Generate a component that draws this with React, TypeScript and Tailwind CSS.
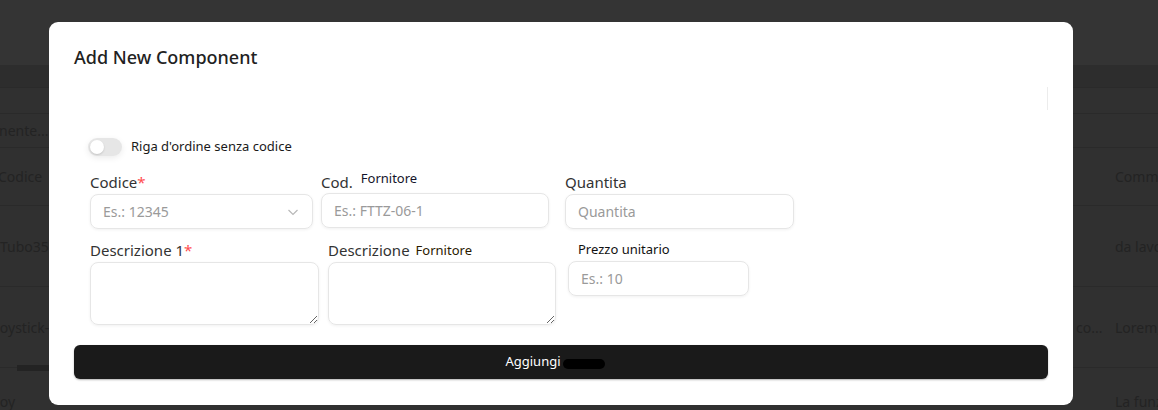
import React from "react";

const font = { fontFamily: '"Noto Sans", "Open Sans", sans-serif' } as React.CSSProperties;

function BgRow({ h, left, off, mid, right, border = true }: { h: number; left: string; off: string; mid?: string; right: string; border?: boolean }) {
  return (
    <div
      className={`flex items-center text-[14px] text-[#232323] ${border ? "border-b border-[#2a2a2a]" : ""}`}
      style={{ height: h }}
    >
      <div className={`w-[120px] ${off} whitespace-nowrap overflow-hidden`}>{left}</div>
      <div className="flex-1" />
      <div className="w-[39px] whitespace-nowrap">{mid ?? ""}</div>
      <div className="w-[43px] whitespace-nowrap overflow-hidden">{right}</div>
    </div>
  );
}

export default function App() {
  return (
    <div className="relative w-[1158px] h-[410px] overflow-hidden bg-[#303030]" style={font}>
      {/* background page under overlay */}
      <div className="h-[65px] bg-[#343434]" />
      <div className="h-[23px] bg-[#2d2d2d] border-b border-[#2a2a2a]" />
      <div className="h-[26px] bg-[#303030] border-b border-[#2a2a2a]" />
      <BgRow h={34} left="nente..." off="-ml-[1px]" right="" />
      <BgRow h={58} left="Codice" off="-ml-[2px]" right="Comme" />
      <BgRow h={81} left="Tubo35" off="ml-0" right="da lavo" />
      <BgRow h={81} left="Joystick-" off="-ml-[4px]" mid="co..." right="Lorem," />
      <div className="flex">
        <div className="ml-[17px] w-[32px] h-[6px] -mt-[3px] bg-[#232323]" />
      </div>
      <div className="flex items-center text-[14px] text-[#232323] h-[40px] pt-[20px]">
        <div className="w-[120px] -ml-[4px]">Joy</div>
        <div className="flex-1" />
        <div className="w-[43px] whitespace-nowrap overflow-hidden">La funz</div>
      </div>

      {/* modal */}
      <div className="absolute left-[49px] top-[22px] w-[1024px] h-[383px] bg-white rounded-[9px] px-[25px] pt-[23px]">
        <h2 className="text-[18px] leading-[24px] font-medium text-[#222]">Add New Component</h2>
        <div className="mt-[18px] h-[23px] flex justify-end">
          <div className="w-px h-full bg-[#ececec]" />
        </div>

        <div className="mt-[28px] pl-[14px] flex items-center h-[18px]">
          <div className="relative w-[34px] h-[18px] rounded-full bg-[#e6e6e6] shadow-[0_2px_6px_rgba(0,0,0,0.08)]">
            <div className="absolute left-[2px] top-[2px] w-[14px] h-[14px] rounded-full bg-white shadow-[0_1px_2px_rgba(0,0,0,0.15)]" />
          </div>
          <span className="ml-[9px] text-[13px] text-[#1a1a1a]">Riga d'ordine senza codice</span>
        </div>

        {/* row 1 */}
        <div className="mt-[16px] pl-[16px] flex">
          <div className="w-[223px]">
            <div className="h-[20px] leading-[20px] text-[15px] text-[#333]">
              Codice<span className="text-[#ff4d4f]">*</span>
            </div>
            <div className="mt-[2px] h-[35px] rounded-[8px] border border-[#e6e6e6] shadow-[0_1px_3px_rgba(0,0,0,0.06)] flex items-center justify-between pl-[12px] pr-[13px]">
              <span className="text-[14px] text-[#9a9a9a]">Es.: 12345</span>
              <svg width="12" height="12" viewBox="0 0 12 12" fill="none" stroke="#b8b8b8" strokeWidth="1.2">
                <path d="M1.5 4 L6 8.5 L10.5 4" />
              </svg>
            </div>
          </div>
          <div className="ml-[8px] w-[228px]">
            <div className="h-[20px] leading-[20px] text-[15px] text-[#333] flex">
              <span>Cod.</span>
              <span className="ml-[8px] text-[13px] text-[#14142a] -mt-[4px]">Fornitore</span>
            </div>
            <div className="mt-[1px] h-[35px] rounded-[8px] border border-[#e6e6e6] shadow-[0_1px_3px_rgba(0,0,0,0.06)] flex items-center pl-[12px]">
              <span className="text-[14px] text-[#9a9a9a]">Es.: FTTZ-06-1</span>
            </div>
          </div>
          <div className="ml-[16px] w-[229px]">
            <div className="h-[20px] leading-[20px] text-[15px] text-[#333]">Quantita</div>
            <div className="mt-[2px] h-[35px] rounded-[8px] border border-[#e6e6e6] shadow-[0_1px_3px_rgba(0,0,0,0.06)] flex items-center pl-[12px]">
              <span className="text-[14px] text-[#9a9a9a]">Quantita</span>
            </div>
          </div>
        </div>

        {/* row 2 */}
        <div className="mt-[11px] pl-[16px] flex">
          <div className="w-[229px]">
            <div className="h-[20px] leading-[20px] text-[15px] text-[#333]">
              Descrizione 1<span className="text-[#ff4d4f]">*</span>
            </div>
            <textarea className="block mt-[2px] w-full h-[63px] rounded-[8px] border border-[#e6e6e6] shadow-[0_1px_3px_rgba(0,0,0,0.06)] outline-none" />
          </div>
          <div className="ml-[9px] w-[228px]">
            <div className="h-[20px] leading-[20px] text-[15px] text-[#333] flex items-center">
              <span>Descrizione</span>
              <span className="ml-[6px] text-[13px] text-[#2a1a00]">Fornitore</span>
            </div>
            <textarea className="block mt-[2px] w-full h-[63px] rounded-[8px] border border-[#e6e6e6] shadow-[0_1px_3px_rgba(0,0,0,0.06)] outline-none" />
          </div>
          <div className="ml-[12px] w-[181px]">
            <div className="h-[18px] leading-[18px] text-[13px] text-[#111] pl-[10px]">Prezzo unitario</div>
            <div className="mt-[3px] h-[35px] rounded-[8px] border border-[#e6e6e6] shadow-[0_1px_3px_rgba(0,0,0,0.06)] flex items-center pl-[12px]">
              <span className="text-[14px] text-[#9a9a9a]">Es.: 10</span>
            </div>
          </div>
        </div>

        <button className="mt-[20px] w-full h-[34px] rounded-[6px] bg-[#1a1a1a] text-white text-[13px] flex items-center justify-center shadow-[0_1px_2px_rgba(0,0,0,0.3)]">
          <span>Aggiungi</span>
          <span className="ml-[2px] mr-[12px] mt-[3px] w-[42px] h-[10px] rounded-[5px] bg-black" />
        </button>
      </div>
    </div>
  );
}
